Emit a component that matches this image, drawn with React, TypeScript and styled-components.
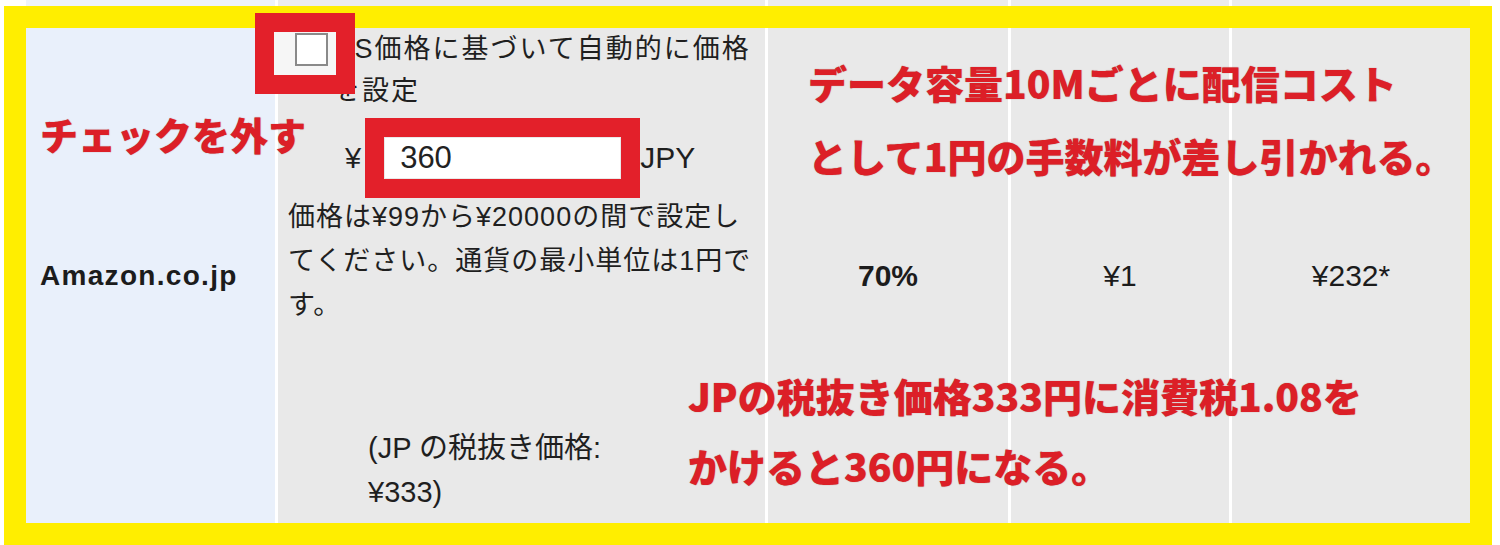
import React from "react";
import styled, { createGlobalStyle } from "styled-components";

const GlobalStyle = createGlobalStyle`
  html, body { margin: 0; padding: 0; background: #ffffff; }
  body { font-family: "Liberation Sans", "Noto Sans CJK JP", sans-serif; }
`;

const COLS = "249px 487px 240px 218px 238px";

const Page = styled.div`
  width: 1500px;
  height: 545px;
  overflow: hidden;
  background: #ffffff;
`;

const PrevRow = styled.div`
  display: grid;
  grid-template-columns: ${COLS};
  column-gap: 3px;
  margin-left: 26px;
  width: 1444px;
  height: 6px;
  background: #ffffff;
`;

const PrevCell = styled.div<{ $head?: boolean }>`
  background: ${(p) => (p.$head ? "#eef3fb" : "#ececec")};
`;

const Frame = styled.div`
  position: relative;
  margin-left: 4px;
  width: 1444px;
  height: 495px;
  border: 22px solid #ffee00;
`;

const Row = styled.div`
  display: grid;
  grid-template-columns: ${COLS};
  column-gap: 3px;
  height: 100%;
  background: #ffffff;
`;

const StoreCell = styled.div`
  display: flex;
  align-items: center;
  padding-left: 14px;
  background: #e9f0fb;
  font-family: "Liberation Sans", sans-serif;
  font-weight: 700;
  font-size: 28px;
  letter-spacing: 1.3px;
  color: #1c1c1c;
`;

const PriceCell = styled.div`
  display: flex;
  flex-direction: column;
  background: #e9e9e9;
  color: #1f1f1f;
  font-family: "Liberation Sans", "Noto Sans CJK JP", sans-serif;
`;

const CheckLine = styled.div`
  display: flex;
  align-items: flex-start;
  padding-left: 17px;
`;

const CheckWrap = styled.div`
  position: relative;
  width: 33px;
  height: 33px;
  margin-top: 5px;
  flex: none;
`;

const CheckBox = styled.div`
  position: relative;
  z-index: 2;
  width: 29px;
  height: 29px;
  background: #ffffff;
  border: 2px solid #8a8a8a;
`;

const RedBox = styled.div<{ $fill?: string }>`
  position: absolute;
  z-index: 1;
  border: 19px solid #e3202a;
  background: ${(p) => p.$fill || "transparent"};
  box-sizing: border-box;
`;

const CheckLabel = styled.div`
  margin-left: 5px;
  font-size: 27px;
  line-height: 42px;
  letter-spacing: 2px;
  white-space: nowrap;
`;

const PriceLine = styled.div`
  display: flex;
  align-items: center;
  height: 80px;
  margin-top: 6px;
  padding-left: 67px;
  font-size: 29px;
`;

const InputWrap = styled.div`
  position: relative;
  margin-left: 24px;
  width: 235px;
  height: 40px;
`;

const PriceInput = styled.div`
  position: relative;
  z-index: 2;
  box-sizing: border-box;
  width: 100%;
  height: 100%;
  padding-left: 15px;
  background: #ffffff;
  font-size: 31px;
  line-height: 40px;
  color: #222;
`;

const Currency = styled.span`
  margin-left: 20px;
  font-size: 30px;
`;

const Description = styled.div`
  margin-top: -3px;
  padding-left: 10px;
  font-size: 27px;
  line-height: 44px;
  letter-spacing: 1px;
  white-space: nowrap;
`;

const TaxNote = styled.div`
  margin-top: 99px;
  padding-left: 90px;
  font-size: 29px;
  line-height: 44px;
  white-space: nowrap;
`;

const ValueCell = styled.div<{ $bold?: boolean }>`
  display: flex;
  align-items: center;
  justify-content: center;
  background: #e9e9e9;
  font-family: "Liberation Sans", sans-serif;
  font-size: 30px;
  font-weight: ${(p) => (p.$bold ? 700 : 400)};
  color: #1c1c1c;
`;

const Callout = styled.div<{ $left: number; $top: number; $lh: number; $size: number }>`
  position: absolute;
  z-index: 5;
  left: ${(p) => p.$left}px;
  top: ${(p) => p.$top}px;
  font-family: "Noto Sans CJK JP", sans-serif;
  font-weight: 900;
  font-size: ${(p) => p.$size}px;
  line-height: ${(p) => p.$lh}px;
  color: #dc1f27;
  white-space: nowrap;
  text-shadow: 0 0 1px rgba(120, 0, 0, 0.55);
`;

export default function App() {
  return (
    <Page>
      <GlobalStyle />
      <PrevRow>
        <PrevCell $head />
        <PrevCell />
        <PrevCell />
        <PrevCell />
        <PrevCell />
      </PrevRow>
      <Frame>
        <Row>
          <StoreCell>Amazon.co.jp</StoreCell>
          <PriceCell>
            <CheckLine>
              <CheckWrap>
                <CheckBox />
                <RedBox
                  $fill="#f6f6f6"
                  style={{ left: -40, top: -20, width: 100, height: 81 }}
                />
              </CheckWrap>
              <CheckLabel>
                US価格に基づいて自動的に価格
                <br />
                を設定
              </CheckLabel>
            </CheckLine>
            <PriceLine>
              <span>¥</span>
              <InputWrap>
                <PriceInput>360</PriceInput>
                <RedBox style={{ left: -20, top: -20, width: 275, height: 80 }} />
              </InputWrap>
              <Currency>JPY</Currency>
            </PriceLine>
            <Description>
              価格は¥99から¥20000の間で設定し
              <br />
              てください。通貨の最小単位は1円で
              <br />
              す。
            </Description>
            <TaxNote>
              (JP の税抜き価格:
              <br />
              ¥333)
            </TaxNote>
          </PriceCell>
          <ValueCell $bold>70%</ValueCell>
          <ValueCell>¥1</ValueCell>
          <ValueCell>¥232*</ValueCell>
        </Row>
        <Callout $left={14} $top={84} $lh={44} $size={38}>
          チェックを外す
        </Callout>
        <Callout $left={782} $top={18} $lh={73} $size={39}>
          データ容量10Mごとに配信コスト
          <br />
          として1円の手数料が差し引かれる。
        </Callout>
        <Callout $left={662} $top={332} $lh={70} $size={39}>
          JPの税抜き価格333円に消費税1.08を
          <br />
          かけると360円になる。
        </Callout>
      </Frame>
    </Page>
  );
}
